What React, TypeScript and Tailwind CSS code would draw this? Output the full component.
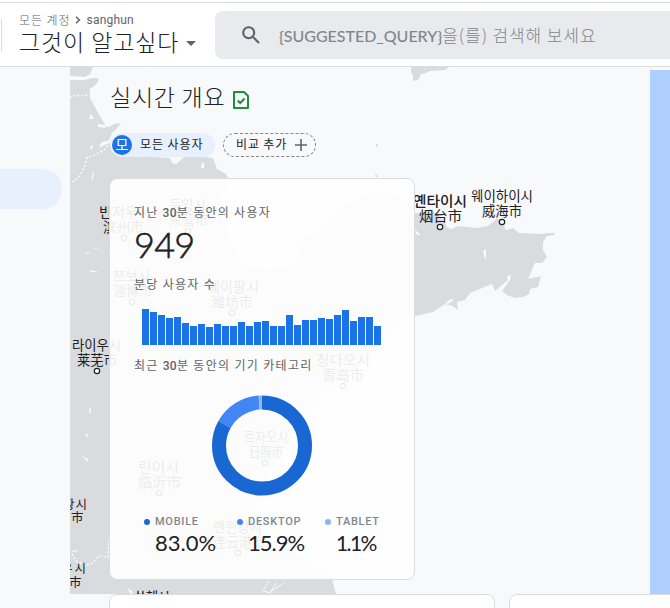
const LAND =
  'M70 67H93L90 74L91 78L98 78L98 82L93 87L90 88L90 98L97 111L106 126L109 127L114 124L121 123L118 127L112 133L110 138L125 152L150 157L170 158L176 164L184 157L205 157L213 158L217 169L226 174L228 178L222 200L225 225L240 262L270 270L298 262L300 250L290 243L320 230L340 205L380 190L410 200L415 213L421 213L430 209L440 216L448 228L453 229L457 226L477 228L488 226L493 222L497 218L503 223L506 230L513 228L519 233L543 234L547 233L555 233L554 235L547 236L543 242L543 250L547 257L542 263L535 263L528 279L541 276L538 287L530 289L529 294L523 297L515 298L507 295L502 291L510 280L508 280L495 291L492 284L470 293L465 300L457 302L458 310L453 306L445 304L436 310L433 312L415 316L400 322L385 340L360 368L320 395L300 430L275 460L250 520L280 545L315 565L332 579L336 594H70Z';

type Place = { ko: string; zh: string; x: number; y: number; w: number; zw: number; cx: number; bold?: boolean; zx?: number };

const PLACES: Place[] = [
  { ko: '빈저우시', zh: '滨州市', x: 99, y: 217, w: 52, zw: 41, cx: 124, zx: 103 },
  { ko: '둥잉시', zh: '东营市', x: 169, y: 210, w: 37, zw: 39, cx: 188 },
  { ko: '쯔보시', zh: '淄博市', x: 113, y: 281, w: 37, zw: 39, cx: 132 },
  { ko: '웨이팡시', zh: '潍坊市', x: 207, y: 292, w: 52, zw: 42, cx: 232, zx: 211 },
  { ko: '라이우시', zh: '莱芜市', x: 72, y: 350, w: 49, zw: 40, cx: 97, zx: 77 },
  { ko: '칭다오시', zh: '青岛市', x: 316, y: 365, w: 54, zw: 42, cx: 343, zx: 322 },
  { ko: '르자오시', zh: '日照市', x: 244, y: 442, w: 44, zw: 34, cx: 265, zx: 249 },
  { ko: '린이시', zh: '临沂市', x: 138, y: 472, w: 41, zw: 43, cx: 159 },
  { ko: '롄윈강시', zh: '连云港市', x: 213, y: 532, w: 49, zw: 52, cx: 238 },
  { ko: '옌타이시', zh: '烟台市', x: 413, y: 206, w: 54, zw: 43, cx: 440, zx: 419, bold: true },
  { ko: '웨이하이시', zh: '威海市', x: 471, y: 201, w: 62, zw: 40, cx: 502, zx: 482 },
];

function ChinaMap() {
  return (
    <svg className="absolute inset-0 h-[527px] w-[580px]" viewBox="70 67 580 527" fontFamily="'Noto Sans CJK KR', sans-serif">
      <path d={LAND} fill="#dadbdf" />
      <path d="M411 67H449L445 70L430 71L426 73L421 74L418 80L413 81L413 75L411 72ZM376 144h1.5v3h-1.5ZM375 172l3 5h-2Z" fill="#dadbdf" />
      <g fill="#f8f9fb">
        <path d="M70 76l15 1l5-3l2 4l-7 2H70ZM91 114l3 5h-5ZM98 124l8 1v3l-8-1ZM91 145l2 1l-1 3l-2-1ZM94 171l-1 8l-2 3l2-10ZM170 158h13l-7 6l-4-1ZM202 163h2v5h-3ZM415 230l4 3l1 3l-4-2ZM483 251l3-2v11l-2-4ZM507 276l4-1l-1 5l-2 0ZM445 303l6-4l3 1l-6 4ZM84 253l8-1l-5 2ZM94 248l11 3l-10-2ZM90 270l9 2h-8ZM90 407h1v6h-2ZM85 434h3l-1 4ZM82 456l6 3v3ZM70 551l9-1l-4 2ZM127 588l5 3l1 3h-2Z" />
        <path d="M112 136l-4 5l-6 1l-3 4l2 1l5-3l8-2Z" />
      </g>
      <g fill="none" stroke="#f8f9fb" strokeWidth="1.6" strokeDasharray="2 2">
        <path d="M70 98c5-5 13 0 19-4M107 141v5l-3 4l-9 5l-8 3l-3 10l-6 10l-7 5M72 554l4 7l9 4l6-1l8-8l9 1l1-17" />
      </g>
      <path d="M261 590l9 3l6-10M270 592l14-9M264 589l5-8" fill="none" stroke="#f8f9fb" />
      {PLACES.map((p) => (
        <g key={p.zh} fill="#202124" fontSize="14" fontWeight={p.bold ? 500 : 400}>
          <text x={p.x} y={p.y - 0.5} textLength={p.w} lengthAdjust="spacingAndGlyphs">{p.ko}</text>
          <text x={p.zx ?? p.x} y={p.y + 14.5} fontWeight="400" textLength={p.zw} lengthAdjust="spacingAndGlyphs" fontFamily="'Noto Sans CJK SC', sans-serif">{p.zh}</text>
          <circle cx={p.cx} cy={p.y + 21} r="2.7" fill="#fff" stroke="#202124" strokeWidth="1.2" />
        </g>
      ))}
      <g fill="#202124" fontSize="12.5">
        <text x="63" y="509" textLength="24">황시</text>
        <text x="71" y="521.5">市</text>
        <text x="61" y="573" textLength="25">우시</text>
        <text x="69" y="587">市</text>
        <text x="134" y="602" fontSize="14" textLength="36">쑤첸시</text>
      </g>
    </svg>
  );
}

const MINUTES = [36, 33, 30, 27, 28, 22, 19, 21, 18, 21, 19, 19, 23, 19, 23, 24, 19, 19, 30, 20, 25, 25, 27, 26, 30, 35, 24, 28, 28, 19];

function Donut() {
  const c = 2 * Math.PI * 43;
  const arcs = [
    { from: 0, part: 0.83, color: '#1967d2' },
    { from: 0.83, part: 0.159, color: '#4285f4' },
    { from: 0.99, part: 0.01, color: '#8ab4f8' },
  ];
  return (
    <svg className="ml-[77px] mt-[20px] block size-[101px]" viewBox="0 0 101 101">
      {arcs.map((a) => (
        <circle key={a.color} cx="51" cy="50.5" r="43" fill="none" stroke={a.color} strokeWidth="14"
          strokeDasharray={`${a.part * c} ${c}`} transform={`rotate(${a.from * 360 - 90} 51 50.5)`} />
      ))}
    </svg>
  );
}

function Device({ dot, name, value, valueClass }: { dot: string; name: string; value: string; valueClass: string }) {
  return (
    <div>
      <div className="flex h-4 items-center">
        <span className={`size-[6px] rounded-full ${dot}`} />
        <span className="ml-[5px] font-['Roboto',sans-serif] text-[11px] font-medium leading-4 tracking-[0.72px] text-[#80868b]">{name}</span>
      </div>
      <div className={`-mt-px ml-[11px] font-['Lato',sans-serif] leading-7 text-[#202124] ${valueClass}`}>{value}</div>
    </div>
  );
}

function Header() {
  return (
    <header className="flex h-[67px] border-b border-[#dadce0] bg-white">
      <div className="mt-[2px] flex w-full border-t border-[#dadce0]">
        <div className="mt-[16px] h-[33px] w-[2px] shrink-0 border-r border-[#dadce0]" />
        <div className="w-[213px] shrink-0 pl-[17px] pt-[9px]">
          <div className="flex h-[16px] items-center whitespace-nowrap text-[12px] text-[#5f6368]">
            <span className="font-light tracking-[0.95px]">모든 계정</span>
            <svg className="ml-[4px] mr-[6px] h-[8px] w-[6px]" viewBox="0 0 6 8" fill="none" stroke="#5f6368" strokeWidth="1.5"><path d="M1 .8L4.4 4L1 7.2" /></svg>
            <span className="font-['Roboto',sans-serif] tracking-[0.2px]">sanghun</span>
          </div>
          <div className="flex h-[26px] items-center whitespace-nowrap text-[23px] font-light text-[#202124]">
            <span className="tracking-[0.9px]">그것이 알고싶다</span>
            <span className="ml-[7px] mt-[4px] border-x-[5px] border-t-[5px] border-x-transparent border-t-[#5f6368]" />
          </div>
        </div>
        <div className="mt-[8px] flex h-[48px] flex-1 items-center rounded-l-lg bg-[#e8eaed] pl-[27px]">
          <svg className="size-[18px] shrink-0" viewBox="0 0 18 18" fill="none" stroke="#5f6368" strokeWidth="2.1"><circle cx="6.7" cy="6.7" r="5.5" /><path d="M10.8 10.8L17 17" /></svg>
          <div className="-mt-[1px] ml-[19px] flex items-baseline whitespace-nowrap text-[16px] text-[#80868b]">
            <span className="font-['Lato',sans-serif] font-medium">{'{SUGGESTED_QUERY}'}</span>
            <span className="text-[17px] font-light tracking-[0.9px]">을(를) 검색해 보세요</span>
          </div>
        </div>
      </div>
    </header>
  );
}

export default function App() {
  return (
    <div className="flex h-[608px] w-[670px] flex-col overflow-hidden bg-[#f8f9fb] font-['Noto_Sans_CJK_KR',sans-serif]">
      <Header />
      <div className="flex h-[527px] shrink-0">
        <aside className="w-[70px] pt-[102px]">
          <div className="h-[40px] w-[62px] rounded-r-full bg-[#e8f0fe]" />
        </aside>
        <main className="relative w-[580px] overflow-hidden">
          <ChinaMap />
          <div className="relative pl-[40px] pt-[12px]">
            <div className="flex h-[34px] items-center whitespace-nowrap">
              <h1 className="text-[23px] font-light leading-[34px] tracking-[0.75px] text-[#202124]">실시간 개요</h1>
              <svg className="ml-[8px] mt-[7px] h-[18px] w-[16px]" viewBox="0 0 16 18" fill="none" stroke="#1e8e3e" strokeWidth="2"><path d="M1 1H11L15 5V17H1Z" strokeLinejoin="round" /><path d="M4.7 9.5L7.2 12L11.6 7.5" /></svg>
            </div>
            <div className="mt-[20px] flex h-[24px] whitespace-nowrap text-[12px] text-[#202124]">
              <div className="flex w-[105px] items-center rounded-full bg-[#e8f0fe]">
                <span className="ml-[2px] flex size-[20px] items-center justify-center rounded-full bg-[#1a73e8] pb-[2px] text-[14px] leading-none text-white">모</span>
                <span className="-mt-[2px] ml-[8px] tracking-[0.95px]">모든 사용자</span>
              </div>
              <div className="ml-[8px] flex w-[93px] items-center rounded-full border border-dashed border-[#80868b] bg-[#f8f9fb] pl-[12px]">
                <span className="-mt-[2px] tracking-[0.85px]">비교 추가</span>
                <svg className="ml-[8px] size-[12px]" viewBox="0 0 12 12" stroke="#5f6368" strokeWidth="1.6"><path d="M6 0V12M0 6H12" /></svg>
              </div>
            </div>
            <section className="-ml-px mt-[21px] h-[402px] w-[306px] rounded-lg border border-[#dadce0] bg-white/91 bg-clip-padding pl-[24px] pt-[24px] text-[12px] leading-[18px] text-[#5f6368]">
              <h2 className="tracking-[1.28px]">지난 <b className="font-['Roboto',sans-serif] font-medium tracking-[0.3px]">30</b>분 동안의 사용자</h2>
              <div className="mt-[2px] h-[40px] font-['Lato',sans-serif] text-[36px] font-light leading-[40px] tracking-[-0.7px] text-[#202124] [-webkit-text-stroke:0.6px_#202124]">949</div>
              <h2 className="mt-[11px] tracking-[1.3px]">분당 사용자 수</h2>
              <div className="ml-[8px] mt-[16px] flex h-[36px] items-end gap-px">
                {MINUTES.map((h, i) => (
                  <div key={i} className="w-[7px] bg-[#1a73e8]" style={{ height: h }} />
                ))}
              </div>
              <h2 className="mt-[11px] tracking-[1.32px]">최근 <b className="font-['Roboto',sans-serif] font-medium tracking-[0.3px]">30</b>분 동안의 기기 카테고리</h2>
              <Donut />
              <div className="mt-[18px] grid grid-cols-[93px_88px_80px] pl-[10px]">
                <Device dot="bg-[#1967d2]" name="MOBILE" value="83.0%" valueClass="text-[22px]" />
                <Device dot="bg-[#4285f4]" name="DESKTOP" value="15.9%" valueClass="text-[22px] tracking-[-1px]" />
                <Device dot="bg-[#8ab4f8]" name="TABLET" value="1.1%" valueClass="text-[21px] tracking-[-1.6px]" />
              </div>
            </section>
          </div>
        </main>
        <div className="mt-[3px] w-[20px] bg-[#aecfff]" />
      </div>
      <div className="flex h-[14px] shrink-0 gap-[14px] overflow-hidden pl-[109px]">
        <div className="h-[40px] w-[386px] shrink-0 rounded-lg border border-[#dadce0] bg-white" />
        <div className="h-[40px] w-[300px] shrink-0 rounded-lg border border-[#dadce0] bg-white" />
      </div>
    </div>
  );
}
